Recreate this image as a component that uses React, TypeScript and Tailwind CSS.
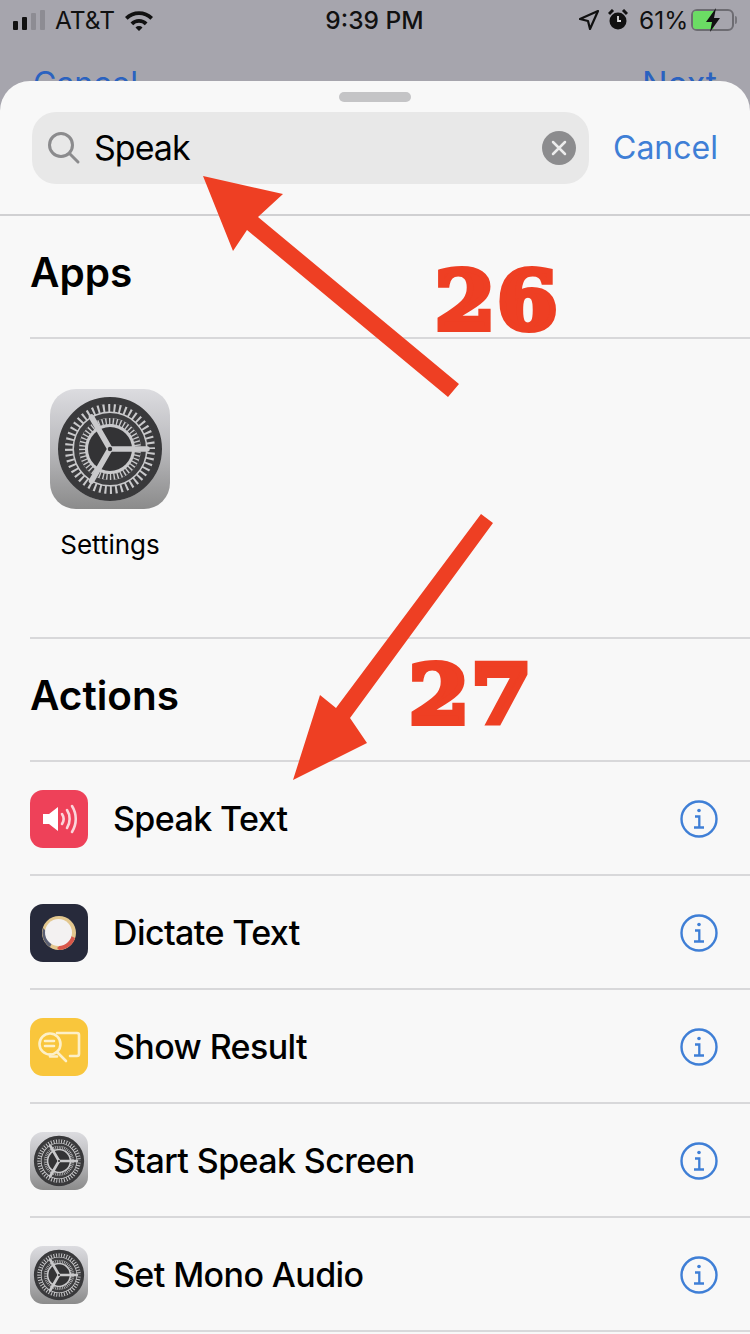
import React from 'react';

const GearIcon: React.FC<{ size: number; rounded: string }> = ({ size, rounded }) => (
  <div className={`flex-shrink-0 overflow-hidden bg-gradient-to-b from-[#dcdce0] via-[#b9b9bc] to-[#8b8b8b] ${rounded}`} style={{ width: size, height: size }}>
    <svg viewBox="0 0 120 120" width={size} height={size}>
      <circle cx="60" cy="60" r="52" fill="#c9c9cb" />
      <circle cx="60" cy="60" r="48.5" fill="none" stroke="#39393b" strokeWidth="7" />
      <circle cx="60" cy="60" r="41.5" fill="none" stroke="#39393b" strokeWidth="8" strokeDasharray="3.400 2.030" />
      <circle cx="60" cy="60" r="33.5" fill="none" stroke="#3d3d3f" strokeWidth="5" />
      <circle cx="60" cy="60" r="28" fill="none" stroke="#3d3d3f" strokeWidth="6" strokeDasharray="2.300 1.370" />
      <circle cx="60" cy="60" r="22" fill="#333335" />
      <g stroke="#c9c9cb" strokeWidth="5.500" strokeLinecap="round">
        <line x1="60" y1="60" x2="97" y2="60" />
        <line x1="60" y1="60" x2="41.500" y2="28" />
        <line x1="60" y1="60" x2="41.500" y2="92" />
      </g>
      <circle cx="60" cy="60" r="2.200" fill="#333335" />
    </svg>
  </div>
);

const SpeakerIcon = () => (
  <div className="w-[58px] h-[58px] flex-shrink-0 rounded-[13px] bg-[#ee4159]">
    <svg viewBox="0 0 58 58" width="58" height="58" fill="none">
      <path d="M13 24h6l9-7v24l-9-7h-6z" fill="#fff" />
      <g stroke="#fbd5da" strokeWidth="2.600" strokeLinecap="round">
        <path d="M32 24c2 3 2 7 0 10" />
        <path d="M37 20c3.500 5 3.500 13 0 18" />
        <path d="M42 16c5 8 5 18 0 26" />
      </g>
    </svg>
  </div>
);

const DictateIcon = () => (
  <div className="w-[58px] h-[58px] flex-shrink-0 rounded-[13px] bg-[#272a3b]">
    <svg viewBox="0 0 58 58" width="58" height="58">
      <circle cx="29" cy="29" r="17" fill="#e3c78e" />
      <path d="M29 46a17 17 0 0 0 16-12l-4-2-14 12z" fill="#d8574a" />
      <path d="M13 24a17 17 0 0 0 7 19l4-8z" fill="#5a5f73" />
      <circle cx="28.500" cy="28.500" r="13.500" fill="#f3f1f1" />
    </svg>
  </div>
);

const ResultIcon = () => (
  <div className="w-[58px] h-[58px] flex-shrink-0 rounded-[13px] bg-[#f9c63c]">
    <svg viewBox="0 0 58 58" width="58" height="58" fill="none" stroke="#fdf0c8" strokeWidth="2.600" strokeLinecap="round" strokeLinejoin="round">
      <path d="M27 15h20a2 2 0 0 1 2 2v19a2 2 0 0 1-2 2h-7" />
      <circle cx="20" cy="26" r="10.500" />
      <path d="M27 34l9 9" />
      <path d="M15 23h9M15 28h9" />
      <path d="M20 36.500v2h7" />
    </svg>
  </div>
);

const InfoIcon = () => (
  <svg viewBox="0 0 38 38" width="38" height="38" fill="none" stroke="#3f7fd6" className="flex-shrink-0">
    <circle cx="19" cy="19" r="17.500" strokeWidth="2.400" />
    <circle cx="19" cy="10.500" r="1.800" fill="#3f7fd6" stroke="none" />
    <path d="M15 16.500h4.300V27M14 27.500h10" strokeWidth="2.300" />
  </svg>
);

const StatusBar = () => (
  <div className="flex items-center h-[40px] px-[13px] text-[24.500px] leading-none text-[#111]">
    <div className="flex items-end gap-[4px] h-[20px] w-[33px]">
      <div className="w-[5px] h-[9px] bg-[#111] rounded-[1px]" />
      <div className="w-[5px] h-[13px] bg-[#111] rounded-[1px]" />
      <div className="w-[5px] h-[17px] bg-[#8d8c93] rounded-[1px]" />
      <div className="w-[5px] h-[20px] bg-[#8d8c93] rounded-[1px]" />
    </div>
    <span className="ml-[9px] w-[60px]">AT&amp;T</span>
    <svg viewBox="0 0 30 22" width="30" height="22" className="ml-[9px]">
      <path d="M1 8a20 20 0 0 1 28 0l-2.600 2.800a16 16 0 0 0-22.800 0zM6.500 13.500a12 12 0 0 1 17 0l-2.700 2.800a8 8 0 0 0-11.600 0zM11.500 18.500a5 5 0 0 1 7 0L15 22z" fill="#111" />
    </svg>
    <div className="flex-1 text-center font-medium pl-[16px]">9:39 PM</div>
    <svg viewBox="0 0 20 20" width="20" height="20">
      <path d="M19 1L1 9l8 2 2 8z" fill="none" stroke="#111" strokeWidth="2.200" strokeLinejoin="round" />
    </svg>
    <svg viewBox="0 0 20 22" width="20" height="22" className="ml-[9px]">
      <circle cx="10" cy="12" r="8.500" fill="#111" />
      <path d="M1 5l4-4M19 5l-4-4" stroke="#111" strokeWidth="3" />
      <path d="M10 7v5h3" stroke="#ddd" strokeWidth="1.800" fill="none" />
    </svg>
    <span className="ml-[11px] w-[46px]">61%</span>
    <div className="relative ml-[6px] w-[43px] h-[22px] rounded-[6px] border-2 border-[#6d6c72]">
      <div className="w-[21px] h-full bg-[#6bdc64] rounded-l-[3px]" />
      <svg viewBox="0 0 16 24" width="16" height="24" className="absolute left-[12px] top-[-3px]">
        <path d="M11 0L1 14h6l-2 10 10-14H9z" fill="#111" />
      </svg>
    </div>
    <div className="w-[2px] h-[8px] ml-[1px] bg-[#77767c] rounded-r" />
  </div>
);

const actions = [
  { name: 'Speak Text', icon: <SpeakerIcon /> },
  { name: 'Dictate Text', icon: <DictateIcon /> },
  { name: 'Show Result', icon: <ResultIcon /> },
  { name: 'Start Speak Screen', icon: <GearIcon size={58} rounded="rounded-[13px]" /> },
  { name: 'Set Mono Audio', icon: <GearIcon size={58} rounded="rounded-[13px]" /> },
];

const App: React.FC = () => {
  return (
    <div className="relative w-[750px] h-[1334px] overflow-hidden bg-[#a6a5ad] font-['Inter','Liberation_Sans',sans-serif] text-black">
      <StatusBar />

      {/* Page behind the sheet, only the top of the nav shows */}
      <div className="h-[41px] overflow-hidden px-[33px] pt-[24px] flex justify-between text-[34px] leading-[40px] text-[#2a62c0]">
        <span className="text-[32px]">Cancel</span>
        <span>Next</span>
      </div>

      {/* Sheet */}
      <div className="h-[1253px] bg-[#f8f8f8] rounded-t-[30px]">
        <div className="flex justify-center pt-[11px]">
          <div className="w-[72px] h-[10px] rounded-full bg-[#c4c4c6]" />
        </div>

        <div className="flex items-center h-[72px] mt-[10px] pl-[32px]">
          <div className="flex items-center w-[557px] h-[72px] rounded-[24px] bg-[#e8e8e8] pl-[15px] pr-[13px]">
            <svg viewBox="0 0 34 34" width="34" height="34" fill="none" stroke="#8b8b8d" strokeWidth="3" strokeLinecap="round">
              <circle cx="14" cy="14" r="11.500" />
              <path d="M23 23l8 8" />
            </svg>
            <span className="ml-[13px] flex-1 text-[34px] leading-none tracking-[-1px]">Speak</span>
            <div className="w-[34px] h-[34px] rounded-full bg-[#8c8c8e] flex items-center justify-center">
              <svg viewBox="0 0 16 16" width="16" height="16" stroke="#ececec" strokeWidth="2.500" strokeLinecap="round">
                <path d="M2 2l12 12M14 2L2 14" />
              </svg>
            </div>
          </div>
          <span className="ml-[24px] text-[32px] leading-none text-[#3f7fd6]">Cancel</span>
        </div>

        <div className="h-[2px] mt-[30px] bg-[#d0d0d2]" />

        {/* Apps */}
        <div className="ml-[30px] border-b-2 border-[#d8d8da] h-[123px] flex items-center pb-[7px]">
          <h2 className="text-[40.500px] leading-none font-semibold">Apps</h2>
        </div>
        <div className="ml-[30px] h-[300px] border-b-2 border-[#d8d8da] pt-[50px] pl-[20px]">
          <div className="flex flex-col items-center w-[120px]">
            <GearIcon size={120} rounded="rounded-[26px]" />
            <span className="mt-[21px] text-[26px] leading-[30px] whitespace-nowrap">Settings</span>
          </div>
        </div>

        {/* Actions */}
        <div className="ml-[30px] border-b-2 border-[#d8d8da] h-[123px] flex items-center pb-[6px]">
          <h2 className="text-[40.500px] leading-none font-semibold">Actions</h2>
        </div>
        {actions.map((action) => (
          <div key={action.name} className="ml-[30px] h-[114px] flex items-center border-b-2 border-[#d8d8da] pr-[32px] pt-[2px]">
            {action.icon}
            <span className="ml-[25px] flex-1 text-[34px] leading-none font-medium tracking-[-0.6px]">{action.name}</span>
            <InfoIcon />
          </div>
        ))}
      </div>

      {/* Red annotations drawn on top of the screenshot */}
      <svg viewBox="0 0 750 1334" width="750" height="1334" className="absolute inset-0 pointer-events-none">
        <path d="M203 176L283 194 258 217 459 384 448 397 247 230 233 251z" fill="#ee3f23" />
        <path d="M293 780L320 695 336 708 481 514 493 523 350 718 367 743z" fill="#ee3f23" />
      </svg>
      <span className="absolute left-[435px] top-[251px] origin-left scale-x-[1.08] font-['DejaVu_Serif',serif] font-bold text-[80px] leading-[100px] tracking-[2px] text-[#ee3f23] [-webkit-text-stroke:6px_#ee3f23]">26</span>
      <span className="absolute left-[409px] top-[645px] origin-left scale-x-[1.08] font-['DejaVu_Serif',serif] font-bold text-[80px] leading-[100px] tracking-[2px] text-[#ee3f23] [-webkit-text-stroke:6px_#ee3f23]">27</span>
    </div>
  );
};

export default App;
